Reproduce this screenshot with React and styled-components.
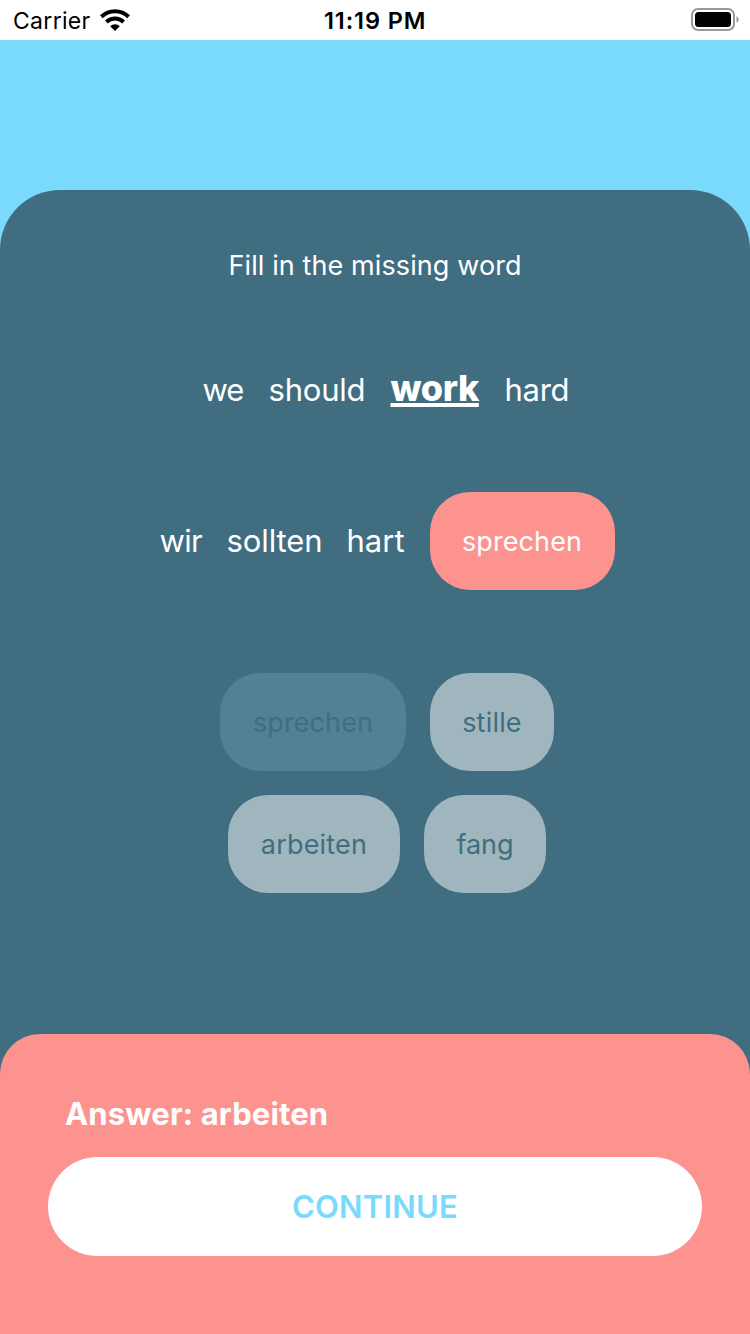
import React from 'react';
import styled, { createGlobalStyle } from 'styled-components';

const GlobalStyle = createGlobalStyle`
  * { box-sizing: border-box; }
  body { margin: 0; background: #7adafc; font-family: Inter, "Liberation Sans", sans-serif; }
`;
const Screen = styled.main`
  width: 750px; height: 1334px; display: flex; flex-direction: column; overflow: hidden; background: #7adafc;
`;
const StatusBar = styled.header`
  height: 40px; flex: none; background: #fff; color: #000; display: grid;
  grid-template-columns: 1fr auto 1fr; align-items: center; padding: 0 11px 0 13px;
`;
const StatusLeft = styled.div`display: flex; align-items: center; gap: 9px;`;
const StatusRight = styled.div`display: flex; justify-content: flex-end;`;
const Label = styled.span`
  display: block; white-space: nowrap;
  width: ${p => p.$w}px; font-size: ${p => p.$size}px; line-height: 40px;
  font-weight: ${p => p.$weight || 400}; letter-spacing: ${p => p.$track || 0}px;
`;
const StatusText = styled(Label)`padding-top: 2px; line-height: 38px;`;
const Word = styled(Label)`font-size: 31px;`;
const ChipText = styled(Label)`font-size: 27px; padding-top: 1px;`;
const Panel = styled.section`
  margin-top: 150px; flex: 1; background: #406e80; border-radius: 60px 60px 0 0; color: #fff;
  display: flex; flex-direction: column; align-items: center; padding-top: 56px;
`;
const Sentence = styled.div`
  display: flex; align-items: center; gap: 25px; height: ${p => p.$h}px;
  margin-top: ${p => p.$top}px; margin-left: ${p => p.$shift}px;
`;
const Target = styled.strong`
  display: block; width: 89px; font-size: 36px; line-height: 38px; padding-bottom: 4px; font-weight: 800; letter-spacing: -0.4px;
  text-decoration: underline; text-decoration-thickness: 4px; text-underline-offset: 2px; text-decoration-skip-ink: none;
`;
const Chip = styled.button`
  border: 0; border-radius: 40px; height: 98px; width: ${p => p.$w}px; padding: 0; flex: none;
  display: flex; align-items: center; justify-content: center; font-family: inherit;
  background: ${p => p.$bg}; color: ${p => p.$color};
`;
const Choices = styled.div`display: flex; flex-direction: column; align-items: center; gap: 24px; margin: 83px 0 0 24px;`;
const ChoiceRow = styled.div`display: flex; gap: 24px;`;
const Feedback = styled.footer`
  margin-top: auto; width: 750px; height: 300px; background: #fd938f; border-radius: 40px 40px 0 0; padding: 60px 48px 0;
`;
const Answer = styled.div`padding-left: 17px;`;
const Continue = styled.button`
  margin-top: 23px; width: 654px; height: 99px; border: 0; border-radius: 50px; background: #fff; color: #7adafc;
  display: flex; align-items: center; justify-content: center; font-family: inherit;
`;

export default function App() {
  return (
    <Screen>
      <GlobalStyle />
      <StatusBar>
        <StatusLeft>
          <StatusText $w={78} $size={23} $track={0.3}>Carrier</StatusText>
          <svg width="30" height="22" viewBox="0 0 30 22" fill="none" stroke="#000" strokeWidth="4">
            <path d="M1.4 7.8a19.5 19.5 0 0 1 27.2 0" /><path d="M6.4 13a12.3 12.3 0 0 1 17.2 0" />
            <path d="M15 22l-4.8-4.8a6.8 6.8 0 0 1 9.6 0z" fill="#000" stroke="none" />
          </svg>
        </StatusLeft>
        <StatusText $w={104} $size={23.5} $weight={600} $track={0.9}>11:19 PM</StatusText>
        <StatusRight>
          <svg width="48" height="24" viewBox="0 0 48 24">
            <rect x="1" y="1" width="42" height="21" rx="6" fill="none" stroke="#999" strokeWidth="2" />
            <rect x="4" y="4" width="36" height="15" rx="3.5" /><path d="M45.5 8q4.5 3.5 0 7z" fill="#999" />
          </svg>
        </StatusRight>
      </StatusBar>
      <Panel>
        <Label $w={293} $size={27} $track={0.1}>Fill in the missing word</Label>
        <Sentence $h={40} $top={84} $shift={21}>
          <Word $w={41} $track={-1}>we</Word><Word $w={97} $track={-0.2}>should</Word>
          <Target>work</Target><Word $w={64} $track={-0.3}>hard</Word>
        </Sentence>
        <Sentence $h={98} $top={82} $shift={24}>
          <Word $w={42} $track={-0.7}>wir</Word><Word $w={95} $track={-0.1}>sollten</Word><Word $w={58}>hart</Word>
          <Chip $w={185} $bg="#fd938f" $color="#fff"><ChipText $track={0.1}>sprechen</ChipText></Chip>
        </Sentence>
        <Choices>
          <ChoiceRow>
            <Chip $w={186} $bg="#528094" $color="#406e80"><ChipText $track={0.1}>sprechen</ChipText></Chip>
            <Chip $w={124} $bg="#9fb6bf" $color="#406e80"><ChipText $track={0.2}>stille</ChipText></Chip>
          </ChoiceRow>
          <ChoiceRow>
            <Chip $w={172} $bg="#9fb6bf" $color="#406e80"><ChipText $track={0.2}>arbeiten</ChipText></Chip>
            <Chip $w={122} $bg="#9fb6bf" $color="#406e80"><ChipText>fang</ChipText></Chip>
          </ChoiceRow>
        </Choices>
        <Feedback>
          <Answer><Label $w={264} $size={31} $weight={700} $track={0.15}>Answer: arbeiten</Label></Answer>
          <Continue><Word $weight={600} $track={0.2}>CONTINUE</Word></Continue>
        </Feedback>
      </Panel>
    </Screen>
  );
}
